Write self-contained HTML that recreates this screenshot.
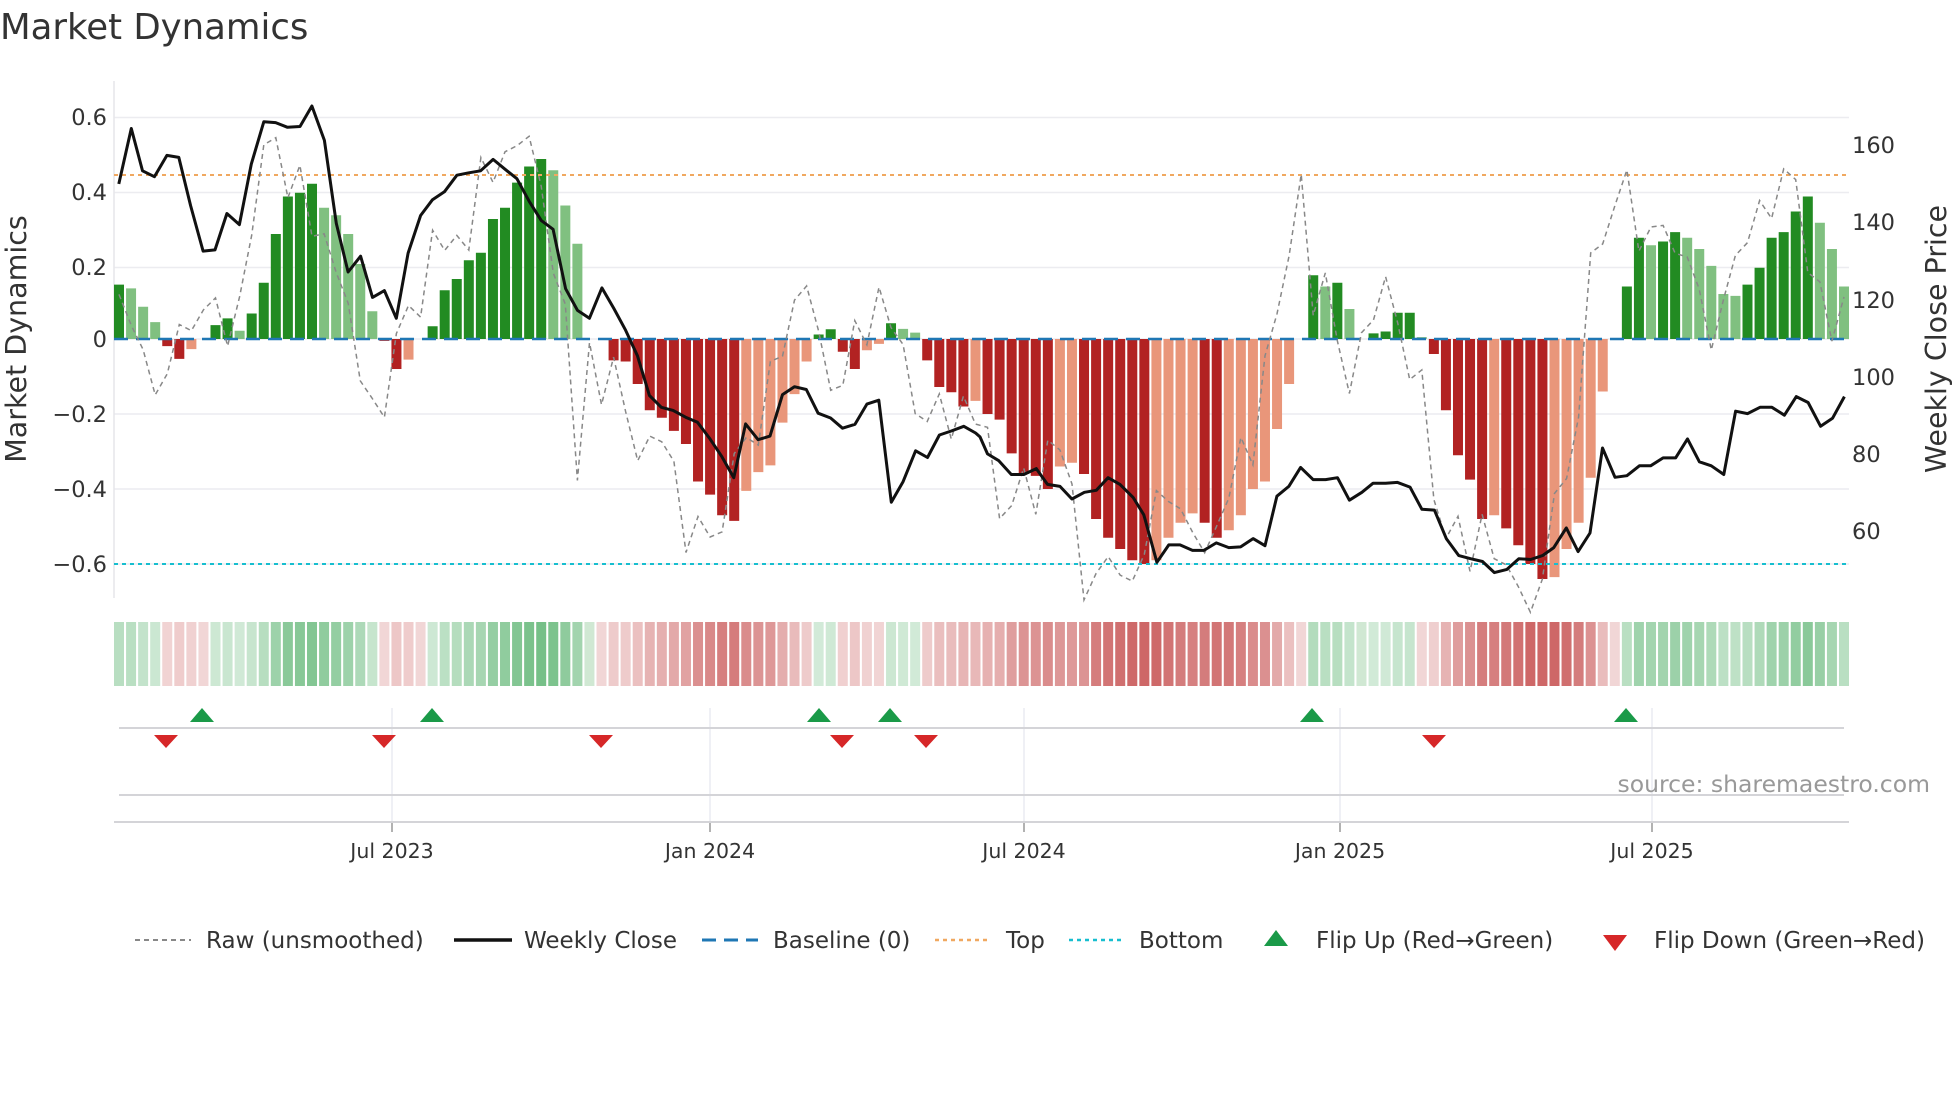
<!DOCTYPE html>
<html><head><meta charset="utf-8"><style>
html,body{margin:0;padding:0;background:#fff;width:1960px;height:1102px;overflow:hidden}
svg{display:block}
text{font-family:"DejaVu Sans","Liberation Sans",sans-serif;fill:#333}
</style></head><body>
<svg id="s" width="1960" height="1102" viewBox="0 0 1960 1102" xmlns="http://www.w3.org/2000/svg">
<text x="0" y="39" font-size="35.5">Market Dynamics</text>
<g id="grid"></g>
<g id="bars"></g>
<g id="lines"></g>
<g font-size="22.5" text-anchor="end">
<text x="107" y="125">0.6</text><text x="107" y="200">0.4</text><text x="107" y="275">0.2</text><text x="107" y="347">0</text>
<text x="107" y="422">−0.2</text><text x="107" y="497">−0.4</text><text x="107" y="572">−0.6</text>
</g>
<g font-size="22.5">
<text x="1852" y="153">160</text><text x="1852" y="230">140</text><text x="1852" y="308">120</text>
<text x="1852" y="385">100</text><text x="1852" y="462">80</text><text x="1852" y="539">60</text>
</g>
<text transform="translate(26,339) rotate(-90)" font-size="28.5" text-anchor="middle">Market Dynamics</text>
<text transform="translate(1946,339) rotate(-90)" font-size="28.5" text-anchor="middle">Weekly Close Price</text>
<text x="1930" y="792" font-size="23.5" text-anchor="end" style="fill:#999">source: sharemaestro.com</text>
<g font-size="20.5" text-anchor="middle">
<text x="392" y="858">Jul 2023</text><text x="710" y="858">Jan 2024</text><text x="1024" y="858">Jul 2024</text>
<text x="1340" y="858">Jan 2025</text><text x="1652" y="858">Jul 2025</text>
</g>
<g font-size="23">
<line x1="135" y1="940" x2="191" y2="940" stroke="#888" stroke-width="2" stroke-dasharray="5,4"/>
<text x="206" y="948">Raw (unsmoothed)</text>
<line x1="454" y1="940" x2="512" y2="940" stroke="#111" stroke-width="3.5"/>
<text x="524" y="948">Weekly Close</text>
<line x1="702" y1="940" x2="758" y2="940" stroke="#1f77b4" stroke-width="3" stroke-dasharray="14,8"/>
<text x="773" y="948">Baseline (0)</text>
<line x1="935" y1="940" x2="991" y2="940" stroke="#f0a860" stroke-width="2.5" stroke-dasharray="4,4"/>
<text x="1006" y="948">Top</text>
<line x1="1069" y1="940" x2="1124" y2="940" stroke="#17becf" stroke-width="2.5" stroke-dasharray="4,4"/>
<text x="1139" y="948">Bottom</text>
<polygon points="1264,946 1288,946 1276,930" fill="#1a9a48"/>
<text x="1316" y="948">Flip Up (Red→Green)</text>
<polygon points="1603,935 1627,935 1615,951" fill="#d62728"/>
<text x="1654" y="948">Flip Down (Green→Red)</text>
</g>
</svg>
<script>
var v=[0.145,0.135,0.086,0.045,-0.019,-0.053,-0.027,0,0.037,0.055,0.022,0.068,0.15,0.28,0.38,0.39,0.414,0.35,0.33,0.28,0.2,0.074,-0.005,-0.08,-0.055,0,0.034,0.13,0.16,0.21,0.23,0.32,0.35,0.417,0.46,0.48,0.45,0.356,0.254,0.0,0.0,
-0.057,-0.06,-0.12,-0.19,-0.21,-0.245,-0.28,-0.38,-0.415,-0.47,-0.485,-0.405,-0.355,-0.337,-0.223,-0.147,-0.06,0.012,0.026,-0.034,-0.08,-0.03,-0.013,0.042,0.027,0.017,-0.057,-0.128,-0.142,-0.18,-0.165,
-0.20,-0.215,-0.305,-0.36,-0.365,-0.40,-0.34,-0.33,-0.36,-0.48,-0.53,-0.56,-0.59,-0.60,-0.59,-0.53,-0.49,-0.465,-0.49,-0.53,-0.51,-0.47,-0.40,-0.38,-0.24,-0.12,0,0.17,0.14,0.15,0.08,0,0.015,0.02,0.07,0.07,0.005,-0.04,-0.19,-0.31,-0.375,-0.48,-0.47,-0.505,-0.55,-0.60,-0.64,-0.635,-0.56,-0.49,-0.37,-0.14,0,0.14,0.27,0.25,0.26,0.285,0.27,0.24,0.195,0.12,0.115,0.145,0.19,0.27,0.285,0.34,0.38,0.31,0.24,0.14];
var N=v.length,x0=119,st=(1844-119)/(N-1);
function X(i){return x0+i*st}
function Y(val){return 339-val*375}
var g='',b='',l='';
[117.5,192.5,267.5,339,414,489,564].forEach(function(y){g+='<line x1="114" x2="1849" y1="'+y+'" y2="'+y+'" stroke="#ececf0" stroke-width="1.5"/>'});
g+='<line x1="114" x2="114" y1="81" y2="598" stroke="#e6e6ea" stroke-width="1.5"/>';
[392,710,1024,1340,1652].forEach(function(x){g+='<line x1="'+x+'" x2="'+x+'" y1="708" y2="822" stroke="#e4e6ee" stroke-width="1.2"/><line x1="'+x+'" x2="'+x+'" y1="822" y2="832" stroke="#999" stroke-width="1.5"/>'});
g+='<line x1="119" x2="1844" y1="728" y2="728" stroke="#d4d4d8" stroke-width="2"/>';
g+='<line x1="119" x2="1844" y1="795" y2="795" stroke="#d4d4d8" stroke-width="2"/>';
g+='<line x1="114" x2="1849" y1="822" y2="822" stroke="#d4d4d8" stroke-width="2"/>';
for(var i=0;i<N;i++){
 var val=v[i],pv=i?v[i-1]:0,c;
 if(val>=0)c=(val>=pv)?'#228b22':'#80c080';else c=(val<=pv)?'#b22222':'#e9967a';
 var y1=Y(Math.max(val,0)),y2=Y(Math.min(val,0));
 if(Math.abs(val)>0.002)b+='<rect x="'+(X(i)-5)+'" y="'+y1+'" width="10" height="'+(y2-y1)+'" fill="'+c+'"/>';
 var a=0.22+0.6*Math.min(Math.abs(val)/0.6,1);
 var sc=val>=0.0?'rgba(60,165,85,'+a+')':'rgba(195,70,70,'+a+')';
 if(Math.abs(val)<0.01)sc=(i>0&&v[i-1]<0)||(v[i+1]<0)?'rgba(210,120,120,0.3)':'rgba(100,180,110,0.3)';
 b+='<rect x="'+(X(i)-5)+'" y="622" width="10" height="64" fill="'+sc+'"/>';
}
var p1=[[190,465],[210,325],[228,432],[247,447],[267,393],[286,398],[305,520],[325,635],[344,632],[363,540],[383,568],[402,415],[422,308],[441,310],[460,322],[480,320],[499,268],[519,355],[538,565],[557,688],[577,648],[596,752],[615,735],[634,805],[653,640],[673,545],[692,505],[711,485],[731,443],[750,437],[769,432],[789,403],[808,428],[827,452],[847,510],[866,558],[885,580],[905,730],[924,785],[943,805],[963,728],[982,780],[1001,835],[1020,900],[1039,1000],[1058,1030],[1077,1038],[1097,1055],[1116,1068],[1136,1110],[1155,1155],[1174,1208],[1193,1072],[1213,1112],[1232,1103],[1252,998],[1271,978],[1290,985],[1309,1045],[1329,1057],[1348,1083],[1368,1073],[1387,1022],[1406,1012],[1426,1270],[1445,1218],[1465,1140],[1484,1157],[1503,1100],[1522,1090],[1542,1078],[1561,1095]];
var p2=[[0,1105],[12,1148],[30,1165],[50,1200],[70,1200],[90,1185],[108,1225],[128,1230],[147,1262],[167,1245],[186,1240],[205,1208],[224,1225],[245,1258],[262,1302],[283,1422],[302,1378],[320,1378],[340,1392],[358,1392],[378,1373],[398,1385],[417,1383],[437,1362],[456,1380],[475,1255],[494,1230],[513,1182],[533,1213],[553,1213],[572,1208],[591,1265],[611,1245],[629,1222],[649,1222],[668,1220],[688,1232],[707,1288],[727,1290],[746,1362],[766,1405],[785,1413],[804,1420],[823,1448],[843,1440],[862,1413],[881,1415],[900,1405],[918,1385],[938,1335],[957,1395],[976,1348],[996,1133],[1016,1207],[1035,1203],[1055,1178],[1073,1178],[1093,1158],[1113,1158],[1132,1110],[1151,1168],[1170,1178],[1190,1200],[1209,1040],[1228,1046],[1248,1030],[1267,1030],[1287,1050],[1306,1003],[1325,1018],[1345,1078],[1364,1058],[1383,1003]];
var pts=p1.map(function(p){return (p[0]/1.6).toFixed(1)+','+(p[1]/2.529).toFixed(1)}).concat(p2.map(function(p){return (980+p[0]/1.6).toFixed(1)+','+(p[1]/2.529).toFixed(1)}));
var r=[];for(i=0;i<N;i++){var nx=i<N-1?v[i+1]:v[i];var rv=v[i]+2.6*(nx-v[i])+0.03*Math.sin(i*1.7);r.push(X(i).toFixed(1)+','+Y(rv).toFixed(1))}
l+='<line x1="114" x2="1849" y1="175" y2="175" stroke="#f0a860" stroke-width="2" stroke-dasharray="4,4"/>';
l+='<line x1="114" x2="1849" y1="564" y2="564" stroke="#17becf" stroke-width="2" stroke-dasharray="4,4"/>';
l+='<line x1="114" x2="1849" y1="339" y2="339" stroke="#1f77b4" stroke-width="2.5" stroke-dasharray="14,8"/>';
l+='<polyline points="'+r.join(' ')+'" fill="none" stroke="#888" stroke-width="1.5" stroke-dasharray="5,4"/>';
l+='<polyline points="'+pts.join(' ')+'" fill="none" stroke="#111" stroke-width="3" stroke-linejoin="round"/>';
[202,432,819,890,1312,1626].forEach(function(x){l+='<polygon points="'+(x-12)+',722 '+(x+12)+',722 '+x+',708" fill="#1a9a48"/>'});
[166,384,601,842,926,1434].forEach(function(x){l+='<polygon points="'+(x-12)+',735 '+(x+12)+',735 '+x+',748" fill="#d62728"/>'});
document.getElementById('grid').innerHTML=g;
document.getElementById('bars').innerHTML=b;
document.getElementById('lines').innerHTML=l;
</script>
</body></html>
